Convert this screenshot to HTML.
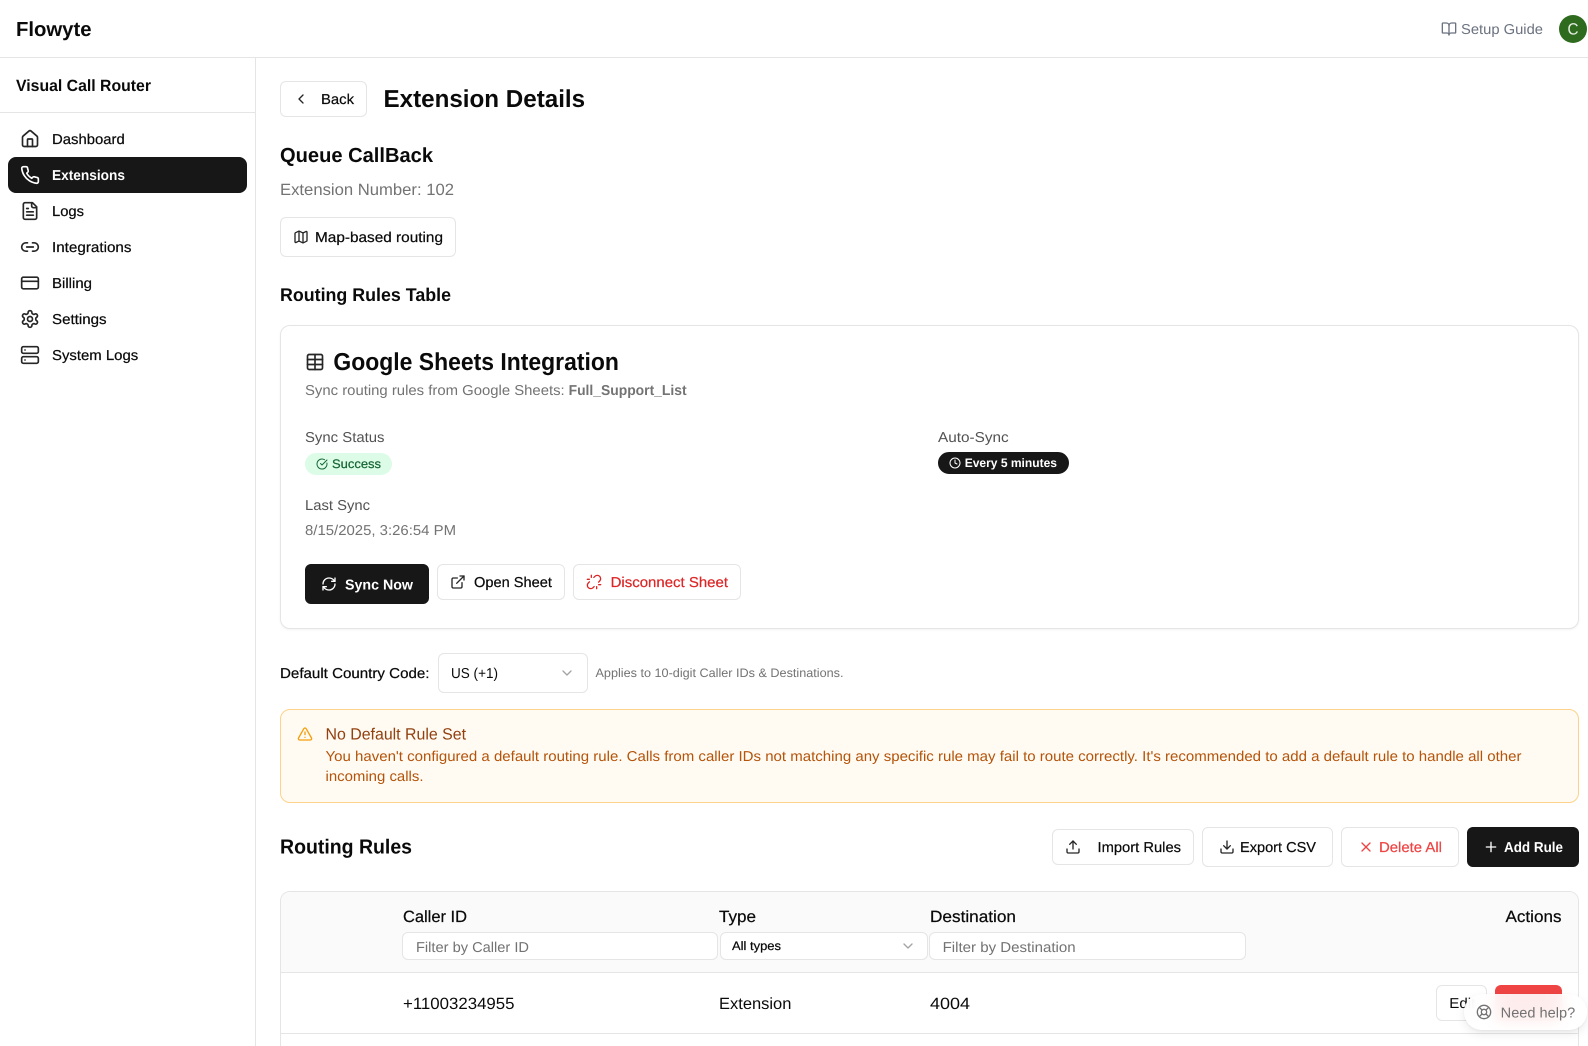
<!DOCTYPE html>
<html lang="en"><head><meta charset="utf-8"><title>Flowyte - Extension Details</title>
<style>
html,body{margin:0;padding:0;width:1588px;height:1046px;overflow:hidden;background:#fff}
#p{position:absolute;left:0;top:0;width:1588px;height:1046px;overflow:hidden;contain:strict}
.b{position:absolute;box-sizing:border-box;background:#fff;border:1px solid #e5e5e5;border-radius:6px}
.d{background:#171717;border-color:#171717}
svg.o{position:absolute;left:0;top:0}
svg text{font-family:"Liberation Sans",Arial,sans-serif;font-size:14.3px;fill:#0a0a0a;text-rendering:geometricPrecision}
.m{stroke:currentColor;stroke-width:.22;color:#0a0a0a}
.sb{font-weight:700}
.w{fill:#fff!important}
.g{fill:#737373}
.l{fill:#525252}
.s12{font-size:12.3px}
.s16{font-size:16.3px}
.s18{font-size:18.4px}
.s20{font-size:20.4px}
.s24{font-size:24.5px}
.ic{fill:none;stroke-width:2;stroke-linecap:round;stroke-linejoin:round}
</style></head><body><div id="p">
<div class="b" style="left:0;top:57px;width:1588px;height:1px;border:0;border-radius:0;background:#e5e5e5"></div>
<div class="b" style="left:255px;top:58px;width:1px;height:988px;border:0;border-radius:0;background:#e5e5e5"></div>
<div class="b" style="left:0;top:112px;width:255px;height:1px;border:0;border-radius:0;background:#e5e5e5"></div>
<div class="b d" style="left:8px;top:157px;width:239px;height:36px;border-radius:8px"></div>
<div class="b" style="left:1559px;top:15px;width:28px;height:28px;border:0;border-radius:50%;background:#2f6b1f"></div>
<div class="b" style="left:280px;top:81px;width:87px;height:36px"></div>
<div class="b" style="left:280px;top:217px;width:176px;height:40px"></div>
<div class="b" style="left:280px;top:325px;width:1299px;height:304px;border-radius:10px;box-shadow:0 1px 2px rgba(0,0,0,.05)"></div>
<div class="b" style="left:305px;top:453px;width:87px;height:22px;border:0;border-radius:11px;background:#dcfce7"></div>
<div class="b d" style="left:938px;top:452px;width:131px;height:22px;border-radius:11px"></div>
<div class="b d" style="left:305px;top:564px;width:124px;height:40px"></div>
<div class="b" style="left:437px;top:564px;width:128px;height:36px"></div>
<div class="b" style="left:573px;top:564px;width:168px;height:36px"></div>
<div class="b" style="left:438px;top:653px;width:150px;height:40px"></div>
<div class="b" style="left:280px;top:709px;width:1299px;height:94px;border-color:#fdd28a;background:#fffbf3;border-radius:10px"></div>
<div class="b" style="left:1052px;top:829px;width:142px;height:36px"></div>
<div class="b" style="left:1202px;top:827px;width:131px;height:40px"></div>
<div class="b" style="left:1341px;top:827px;width:118px;height:40px"></div>
<div class="b d" style="left:1467px;top:827px;width:112px;height:40px"></div>
<div class="b" style="left:280px;top:891px;width:1299px;height:170px;border-radius:10px"></div>
<div class="b" style="left:281px;top:892px;width:1297px;height:81px;border:0;border-bottom:1px solid #e5e5e5;border-radius:9px 9px 0 0;background:#fafafa"></div>
<div class="b" style="left:281px;top:1033px;width:1297px;height:1px;border:0;border-radius:0;background:#e5e5e5"></div>
<div class="b" style="left:402px;top:932px;width:316px;height:28px"></div>
<div class="b" style="left:720px;top:932px;width:208px;height:28px"></div>
<div class="b" style="left:929px;top:932px;width:317px;height:28px"></div>
<div class="b" style="left:1436px;top:985px;width:51px;height:36px"></div>
<div class="b" style="left:1495px;top:985px;width:67px;height:36px;border:0;background:#ef4444"></div>

<svg class="o" width="1588" height="1046" viewBox="0 0 1588 1046" xmlns="http://www.w3.org/2000/svg">
<defs>
<symbol id="house" viewBox="0 0 24 24"><path d="M15 21v-8a1 1 0 0 0-1-1h-4a1 1 0 0 0-1 1v8"/><path d="M3 10a2 2 0 0 1 .709-1.528l7-5.999a2 2 0 0 1 2.582 0l7 5.999A2 2 0 0 1 21 10v9a2 2 0 0 1-2 2H5a2 2 0 0 1-2-2z"/></symbol>
<symbol id="phone" viewBox="0 0 24 24"><path d="M22 16.92v3a2 2 0 0 1-2.18 2 19.79 19.79 0 0 1-8.63-3.07 19.5 19.5 0 0 1-6-6 19.79 19.79 0 0 1-3.07-8.67A2 2 0 0 1 4.11 2h3a2 2 0 0 1 2 1.72 12.84 12.84 0 0 0 .7 2.81 2 2 0 0 1-.45 2.11L8.09 9.91a16 16 0 0 0 6 6l1.27-1.27a2 2 0 0 1 2.11-.45 12.84 12.84 0 0 0 2.81.7A2 2 0 0 1 22 16.92z"/></symbol>
<symbol id="file" viewBox="0 0 24 24"><path d="M15 2H6a2 2 0 0 0-2 2v16a2 2 0 0 0 2 2h12a2 2 0 0 0 2-2V7Z"/><path d="M14 2v4a2 2 0 0 0 2 2h4"/><path d="M10 9H8"/><path d="M16 13H8"/><path d="M16 17H8"/></symbol>
<symbol id="link" viewBox="0 0 24 24"><path d="M9 17H7A5 5 0 0 1 7 7h2"/><path d="M15 7h2a5 5 0 1 1 0 10h-2"/><path d="M8 12h8"/></symbol>
<symbol id="card" viewBox="0 0 24 24"><rect x="2" y="5" width="20" height="14" rx="2"/><path d="M2 10h20"/></symbol>
<symbol id="gear" viewBox="0 0 24 24"><path d="M12.22 2h-.44a2 2 0 0 0-2 2v.18a2 2 0 0 1-1 1.73l-.43.25a2 2 0 0 1-2 0l-.15-.08a2 2 0 0 0-2.73.73l-.22.38a2 2 0 0 0 .73 2.73l.15.1a2 2 0 0 1 1 1.72v.51a2 2 0 0 1-1 1.74l-.15.09a2 2 0 0 0-.73 2.73l.22.38a2 2 0 0 0 2.73.73l.15-.08a2 2 0 0 1 2 0l.43.25a2 2 0 0 1 1 1.73V20a2 2 0 0 0 2 2h.44a2 2 0 0 0 2-2v-.18a2 2 0 0 1 1-1.73l.43-.25a2 2 0 0 1 2 0l.15.08a2 2 0 0 0 2.73-.73l.22-.39a2 2 0 0 0-.73-2.73l-.15-.08a2 2 0 0 1-1-1.74v-.5a2 2 0 0 1 1-1.74l.15-.09a2 2 0 0 0 .73-2.73l-.22-.38a2 2 0 0 0-2.73-.73l-.15.08a2 2 0 0 1-2 0l-.43-.25a2 2 0 0 1-1-1.73V4a2 2 0 0 0-2-2z"/><circle cx="12" cy="12" r="3"/></symbol>
<symbol id="server" viewBox="0 0 24 24"><rect x="2" y="2" width="20" height="8" rx="2"/><rect x="2" y="14" width="20" height="8" rx="2"/><path d="M6 6h.01"/><path d="M6 18h.01"/></symbol>
<symbol id="book" viewBox="0 0 24 24"><path d="M12 7v14"/><path d="M3 18a1 1 0 0 1-1-1V4a1 1 0 0 1 1-1h5a4 4 0 0 1 4 4 4 4 0 0 1 4-4h5a1 1 0 0 1 1 1v13a1 1 0 0 1-1 1h-6a3 3 0 0 0-3 3 3 3 0 0 0-3-3z"/></symbol>
<symbol id="cl" viewBox="0 0 24 24"><path d="m15 18-6-6 6-6"/></symbol>
<symbol id="cd" viewBox="0 0 24 24"><path d="m6 9 6 6 6-6"/></symbol>
<symbol id="map" viewBox="0 0 24 24"><path d="M14.106 5.553a2 2 0 0 0 1.788 0l3.659-1.83A1 1 0 0 1 21 4.619v12.764a1 1 0 0 1-.553.894l-4.553 2.277a2 2 0 0 1-1.788 0l-4.212-2.106a2 2 0 0 0-1.788 0l-3.659 1.83A1 1 0 0 1 3 19.381V6.618a1 1 0 0 1 .553-.894l4.553-2.277a2 2 0 0 1 1.788 0z"/><path d="M15 5.764v15"/><path d="M9 3.236v15"/></symbol>
<symbol id="table" viewBox="0 0 24 24"><path d="M12 3v18"/><rect x="3" y="3" width="18" height="18" rx="2"/><path d="M3 9h18"/><path d="M3 15h18"/></symbol>
<symbol id="check" viewBox="0 0 24 24"><path d="M21.801 10A10 10 0 1 1 17 3.335"/><path d="m9 11 3 3L22 4"/></symbol>
<symbol id="clock" viewBox="0 0 24 24"><circle cx="12" cy="12" r="10"/><path d="M12 6v6l4 2"/></symbol>
<symbol id="sync" viewBox="0 0 24 24"><path d="M3 12a9 9 0 0 1 9-9 9.75 9.75 0 0 1 6.74 2.74L21 8"/><path d="M21 3v5h-5"/><path d="M21 12a9 9 0 0 1-9 9 9.75 9.75 0 0 1-6.74-2.74L3 16"/><path d="M8 16H3v5"/></symbol>
<symbol id="ext" viewBox="0 0 24 24"><path d="M15 3h6v6"/><path d="M10 14 21 3"/><path d="M18 13v6a2 2 0 0 1-2 2H5a2 2 0 0 1-2-2V8a2 2 0 0 1 2-2h6"/></symbol>
<symbol id="unlink" viewBox="0 0 24 24"><path d="m18.84 12.25 1.72-1.71h-.02a5.004 5.004 0 0 0-.12-7.07 5.006 5.006 0 0 0-6.95 0l-1.72 1.71"/><path d="m5.17 11.75-1.71 1.71a5.004 5.004 0 0 0 .12 7.07 5.006 5.006 0 0 0 6.95 0l1.71-1.71"/><path d="M8 2v3"/><path d="M2 8h3"/><path d="M16 19v3"/><path d="M19 16h3"/></symbol>
<symbol id="warn" viewBox="0 0 24 24"><path d="m21.73 18-8-14a2 2 0 0 0-3.48 0l-8 14A2 2 0 0 0 4 21h16a2 2 0 0 0 1.73-3"/><path d="M12 9v4"/><path d="M12 17h.01"/></symbol>
<symbol id="up" viewBox="0 0 24 24"><path d="M21 15v4a2 2 0 0 1-2 2H5a2 2 0 0 1-2-2v-4"/><path d="m17 8-5-5-5 5"/><path d="M12 3v12"/></symbol>
<symbol id="down" viewBox="0 0 24 24"><path d="M21 15v4a2 2 0 0 1-2 2H5a2 2 0 0 1-2-2v-4"/><path d="m7 10 5 5 5-5"/><path d="M12 15V3"/></symbol>
<symbol id="xx" viewBox="0 0 24 24"><path d="M18 6 6 18"/><path d="m6 6 12 12"/></symbol>
<symbol id="plus" viewBox="0 0 24 24"><path d="M5 12h14"/><path d="M12 5v14"/></symbol>
</defs>

<g class="ic" stroke="#262626">
<use href="#house" x="20" y="129" width="20" height="20"/>
<use href="#phone" x="20" y="165" width="20" height="20" stroke="#fff"/>
<use href="#file" x="20" y="201" width="20" height="20"/>
<use href="#link" x="20" y="237" width="20" height="20"/>
<use href="#card" x="20" y="273" width="20" height="20"/>
<use href="#gear" x="20" y="309" width="20" height="20"/>
<use href="#server" x="20" y="345" width="20" height="20"/>
<use href="#book" x="1441" y="21" width="16" height="16" stroke="#6b7280"/>
<use href="#cl" x="293" y="91" width="16" height="16"/>
<use href="#map" x="293" y="229" width="16" height="16"/>
<use href="#table" x="305" y="352" width="20" height="20"/>
<use href="#check" x="316" y="458" width="12" height="12" stroke="#166534"/>
<use href="#clock" x="949" y="457" width="12" height="12" stroke="#fff"/>
<use href="#sync" x="321" y="576" width="16" height="16" stroke="#fff"/>
<use href="#ext" x="450" y="574" width="16" height="16"/>
<use href="#unlink" x="586" y="574" width="16" height="16" stroke="#dc2626"/>
<use href="#cd" x="559" y="665" width="16" height="16" stroke="#a3a3a3"/>
<use href="#warn" x="297" y="726" width="16" height="16" stroke="#f59e0b"/>
<use href="#up" x="1065" y="839" width="16" height="16"/>
<use href="#down" x="1219" y="839" width="16" height="16"/>
<use href="#xx" x="1358" y="839" width="16" height="16" stroke="#ef4444"/>
<use href="#plus" x="1483" y="839" width="16" height="16" stroke="#fff"/>
<use href="#cd" x="900" y="938" width="16" height="16" stroke="#a3a3a3"/>
</g>

<g>
<text x="16" y="36" textLength="75.5" lengthAdjust="spacingAndGlyphs" class="s20 sb">Flowyte</text>
<text x="1461" y="34" textLength="82" lengthAdjust="spacingAndGlyphs" style="fill:#6b7280">Setup Guide</text>
<text x="1567.5" y="34.5" textLength="11" lengthAdjust="spacingAndGlyphs" class="s16" style="fill:#e7efe3">C</text>
<text x="16" y="91" textLength="135" lengthAdjust="spacingAndGlyphs" class="s16 sb">Visual Call Router</text>
<text x="52" y="144" textLength="72.8" lengthAdjust="spacingAndGlyphs" class="m">Dashboard</text>
<text x="52" y="180" textLength="73" lengthAdjust="spacingAndGlyphs" class="sb w">Extensions</text>
<text x="52" y="216" textLength="32" lengthAdjust="spacingAndGlyphs" class="m">Logs</text>
<text x="52" y="252" textLength="79.5" lengthAdjust="spacingAndGlyphs" class="m">Integrations</text>
<text x="52" y="288" textLength="40" lengthAdjust="spacingAndGlyphs" class="m">Billing</text>
<text x="52" y="324" textLength="54.6" lengthAdjust="spacingAndGlyphs" class="m">Settings</text>
<text x="52" y="360" textLength="86.2" lengthAdjust="spacingAndGlyphs" class="m">System Logs</text>

<text x="321" y="104" textLength="33" lengthAdjust="spacingAndGlyphs" class="m">Back</text>
<text x="383.5" y="107" textLength="201.6" lengthAdjust="spacingAndGlyphs" class="s24 sb">Extension Details</text>
<text x="280" y="162" textLength="153" lengthAdjust="spacingAndGlyphs" class="s20 sb">Queue CallBack</text>
<text x="280" y="195" textLength="174" lengthAdjust="spacingAndGlyphs" class="s16 g">Extension Number: 102</text>
<text x="315" y="242" textLength="128" lengthAdjust="spacingAndGlyphs" class="m">Map-based routing</text>
<text x="280" y="301" textLength="171" lengthAdjust="spacingAndGlyphs" class="s18 sb">Routing Rules Table</text>

<text x="333.4" y="370" textLength="285.5" lengthAdjust="spacingAndGlyphs" class="s24 sb">Google Sheets Integration</text>
<text x="305" y="395" textLength="259.7" lengthAdjust="spacingAndGlyphs" class="g">Sync routing rules from Google Sheets:</text>
<text x="568.6" y="395" textLength="118" lengthAdjust="spacingAndGlyphs" class="g sb">Full_Support_List</text>
<text x="305" y="442" textLength="79.5" lengthAdjust="spacingAndGlyphs" class="l">Sync Status</text>
<text x="938" y="442" textLength="70.7" lengthAdjust="spacingAndGlyphs" class="l">Auto-Sync</text>
<text x="332" y="468" textLength="49" lengthAdjust="spacingAndGlyphs" class="s12 m" style="fill:#166534;color:#166534">Success</text>
<text x="964.7" y="467" textLength="92.3" lengthAdjust="spacingAndGlyphs" class="s12 sb w">Every 5 minutes</text>
<text x="305" y="510" textLength="65" lengthAdjust="spacingAndGlyphs" class="l">Last Sync</text>
<text x="305" y="535" textLength="151" lengthAdjust="spacingAndGlyphs" class="g">8/15/2025, 3:26:54 PM</text>
<text x="345" y="589.5" textLength="68" lengthAdjust="spacingAndGlyphs" class="sb w">Sync Now</text>
<text x="474" y="587" textLength="78" lengthAdjust="spacingAndGlyphs" class="m">Open Sheet</text>
<text x="610.6" y="587" textLength="117.4" lengthAdjust="spacingAndGlyphs" class="m" style="fill:#dc2626;color:#dc2626">Disconnect Sheet</text>

<text x="280" y="678" textLength="149.5" lengthAdjust="spacingAndGlyphs" class="m">Default Country Code:</text>
<text x="451" y="678" textLength="47" lengthAdjust="spacingAndGlyphs">US (+1)</text>
<text x="595.5" y="677" textLength="248" lengthAdjust="spacingAndGlyphs" class="s12 g">Applies to 10-digit Caller IDs &amp; Destinations.</text>

<text x="325.5" y="739.5" textLength="140.5" lengthAdjust="spacingAndGlyphs" class="s16" style="fill:#92400e">No Default Rule Set</text>
<text x="325.5" y="761" textLength="1196" lengthAdjust="spacingAndGlyphs" style="fill:#b45309">You haven't configured a default routing rule. Calls from caller IDs not matching any specific rule may fail to route correctly. It's recommended to add a default rule to handle all other</text>
<text x="325.5" y="781" textLength="98" lengthAdjust="spacingAndGlyphs" style="fill:#b45309">incoming calls.</text>

<text x="280" y="853.5" textLength="132" lengthAdjust="spacingAndGlyphs" class="s20 sb">Routing Rules</text>
<text x="1097.5" y="852" textLength="83.5" lengthAdjust="spacingAndGlyphs" class="m">Import Rules</text>
<text x="1240" y="852" textLength="76" lengthAdjust="spacingAndGlyphs" class="m">Export CSV</text>
<text x="1379" y="852" textLength="63" lengthAdjust="spacingAndGlyphs" class="m" style="fill:#ef4444;color:#ef4444">Delete All</text>
<text x="1504" y="852" textLength="59" lengthAdjust="spacingAndGlyphs" class="sb w">Add Rule</text>

<text x="403" y="922" textLength="64" lengthAdjust="spacingAndGlyphs" class="s16 m">Caller ID</text>
<text x="719" y="922" textLength="37" lengthAdjust="spacingAndGlyphs" class="s16 m">Type</text>
<text x="930" y="922" textLength="86" lengthAdjust="spacingAndGlyphs" class="s16 m">Destination</text>
<text x="1505.5" y="922" textLength="56" lengthAdjust="spacingAndGlyphs" class="s16 m">Actions</text>
<text x="416" y="952" textLength="113" lengthAdjust="spacingAndGlyphs" class="g">Filter by Caller ID</text>
<text x="732" y="950" textLength="49" lengthAdjust="spacingAndGlyphs" class="s12 m">All types</text>
<text x="942.6" y="952" textLength="133" lengthAdjust="spacingAndGlyphs" class="g">Filter by Destination</text>
<text x="403" y="1009" textLength="111.5" lengthAdjust="spacingAndGlyphs" class="s16">+11003234955</text>
<text x="719" y="1009" textLength="72.4" lengthAdjust="spacingAndGlyphs" class="s16">Extension</text>
<text x="930" y="1009" textLength="40" lengthAdjust="spacingAndGlyphs" class="s16">4004</text>
<text x="1449.3" y="1008" textLength="26" lengthAdjust="spacingAndGlyphs">Edit</text>
</g>
</svg>

<div class="b" style="left:1464px;top:994px;width:123px;height:36px;border:0;border-radius:18px;background:rgba(255,255,255,.9);backdrop-filter:blur(8px);box-shadow:0 4px 10px rgba(0,0,0,.08),0 1px 3px rgba(0,0,0,.06)"></div>
<svg class="o" width="1588" height="1046" viewBox="0 0 1588 1046" xmlns="http://www.w3.org/2000/svg" style="pointer-events:none">
<g class="ic" stroke="#737373"><svg x="1476" y="1004" width="16" height="16" viewBox="0 0 24 24"><circle cx="12" cy="12" r="10"/><path d="m4.93 4.93 4.24 4.24"/><path d="m14.83 9.17 4.24-4.24"/><path d="m14.83 14.83 4.24 4.24"/><path d="m9.17 14.83-4.24 4.24"/><circle cx="12" cy="12" r="4"/></svg></g>
<text x="1500.7" y="1017.5" textLength="74.5" lengthAdjust="spacingAndGlyphs" class="g">Need help?</text>
</svg>
</div></body></html>
